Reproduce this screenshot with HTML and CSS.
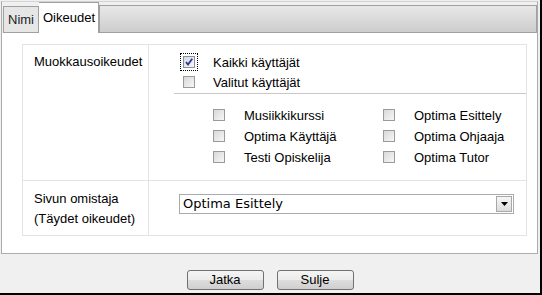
FILE: index.html
```html
<!DOCTYPE html>
<html>
<head>
<meta charset="utf-8">
<link rel="stylesheet" href="styles.css">
</head>
<body>
<div class="frame">
  <div class="panel">
    <div class="tabs">
      <div class="tab">Nimi</div>
      <div class="tab active">Oikeudet</div>
      <div class="tabfill"></div>
    </div>
    <div class="content">
      <div class="grid">
        <div class="cell label l1">Muokkausoikeudet</div>
        <div class="cell r1">
          <div class="main">
            <div class="row"><span class="cb checked focus"><svg viewBox="0 0 10 10" width="10" height="10"><path d="M2 5 L4 7.5 L8.2 1.8" fill="none" stroke="#2a3b8f" stroke-width="1.8"/></svg></span><span class="lbl">Kaikki käyttäjät</span></div>
            <div class="row"><span class="cb"></span><span class="lbl">Valitut käyttäjät</span></div>
          </div>
          <div class="subs">
            <div class="row sub"><span class="cb"></span><span class="lbl">Musiikkikurssi</span></div>
            <div class="row sub"><span class="cb"></span><span class="lbl">Optima Esittely</span></div>
            <div class="row sub"><span class="cb"></span><span class="lbl">Optima Käyttäjä</span></div>
            <div class="row sub"><span class="cb"></span><span class="lbl">Optima Ohjaaja</span></div>
            <div class="row sub"><span class="cb"></span><span class="lbl">Testi Opiskelija</span></div>
            <div class="row sub"><span class="cb"></span><span class="lbl">Optima Tutor</span></div>
          </div>
        </div>
        <div class="cell label l2">Sivun omistaja<br>(Täydet oikeudet)</div>
        <div class="cell r2">
          <div class="select"><span class="seltext">Optima Esittely</span><span class="arrow"><svg viewBox="0 0 7 4" width="7" height="4"><path d="M0 0 H7 L3.5 4 Z" fill="#000"/></svg></span></div>
        </div>
      </div>
    </div>
  </div>
  <div class="footer">
    <button class="btn">Jatka</button>
    <button class="btn">Sulje</button>
  </div>
</div>
</body>
</html>
```
FILE: styles.css
```css
html, body {
  margin: 0;
  padding: 0;
  background: #f0f0f0;
}
body {
  font-family: "Liberation Sans", Arial, sans-serif;
  font-size: 13px;
  color: #000;
}
.frame {
  width: 540px;
  height: 293px;
  border-right: 2px solid #000;
  border-bottom: 2px solid #000;
  background: #f0f0f0;
  display: flex;
  flex-direction: column;
}
.panel {
  margin: 1px 2px 0 1px;
  height: 253px;
  border: 1px solid #acacac;
  border-top-color: #d4d4d4;
  box-sizing: border-box;
  display: flex;
  flex-direction: column;
  background: #fff;
}
.tabs {
  display: flex;
  align-items: flex-end;
  height: 31px;
  background: #f0f0f0;
  padding-left: 1px;
}
.tab {
  height: 27px;
  box-sizing: border-box;
  border: 1px solid #a0a0a0;
  background: #e6e6e6;
  padding: 5px 4px 0 4px;
  line-height: 15px;
  color: #222;
}
.tab.active {
  height: 31px;
  background: #fff;
  border-bottom: none;
  border-left: none;
  padding: 7px 3px 0 4px;
  color: #000;
}
.tabfill {
  flex: 1;
  height: 28px;
  box-sizing: border-box;
  border: 1px solid #a0a0a0;
  background: linear-gradient(#e8e8e8, #cdcdcd);
}
.content {
  flex: 1;
  padding: 11px 10px 18px 20px;
}
.grid {
  display: grid;
  grid-template-columns: 126px 1fr;
  grid-template-rows: 135px 55px;
  border: 1px solid #e3e3e3;
}
.cell.label {
  padding: 9px 0 0 11px;
  line-height: 15px;
  border-right: 1px solid #e3e3e3;
}
.cell.l2 {
  padding-top: 8px;
  line-height: 20px;
  border-top: 1px solid #e3e3e3;
}
.cell.r2 {
  border-top: 1px solid #e3e3e3;
  padding: 13px 12px 0 30px;
}
.cell.r1 {
  padding: 8px 0 0 25px;
}
.main {
  border-bottom: 1px solid #c8c8c8;
  padding: 0 0 0 9px;
  height: 40px;
}
.row {
  display: flex;
  align-items: flex-start;
  height: 20px;
  line-height: 20px;
}
.cb {
  width: 12px;
  height: 12px;
  box-sizing: border-box;
  border: 1px solid #9a9a9a;
  background: linear-gradient(135deg, #d8d8d8, #f7f7f7);
  margin-top: 3px;
  margin-right: 18px;
  flex: none;
  display: flex;
  align-items: center;
  justify-content: center;
}
.cb.checked {
  background: linear-gradient(135deg, #d6dbe6, #f6f7fa);
  border-color: #8a8f9a;
}
.cb.focus {
  outline: 1px dotted #000;
  outline-offset: 2px;
}
.subs {
  display: grid;
  grid-template-columns: 170px 140px;
  padding: 11px 0 0 39px;
}
.row.sub {
  height: 21px;
  line-height: 21px;
}
.row.sub .cb {
  margin-top: 4px;
  margin-right: 19px;
}
.select {
  height: 20px;
  box-sizing: border-box;
  border: 1px solid #a5acb2;
  display: flex;
  align-items: center;
  justify-content: space-between;
  font-family: "DejaVu Sans", Verdana, sans-serif;
  font-size: 13px;
  padding-left: 3px;
}
.seltext {
  line-height: 18px;
}
.arrow {
  width: 16px;
  height: 16px;
  box-sizing: border-box;
  border: 1px solid #a8a8a8;
  background: linear-gradient(#f6f6f6, #dcdcdc);
  margin-right: 1px;
  display: flex;
  align-items: center;
  justify-content: center;
}
.footer {
  flex: 1;
  display: flex;
  justify-content: center;
  gap: 13px;
  padding-top: 16px;
}
.btn {
  width: 77px;
  height: 20px;
  border: 1px solid #707070;
  border-radius: 3px;
  background: linear-gradient(#f4f4f4 0%, #ebebeb 50%, #dddddd 51%, #cfcfcf 100%);
  font-family: "Liberation Sans", Arial, sans-serif;
  font-size: 13px;
  color: #000;
  padding: 0;
  line-height: 18px;
}
```
